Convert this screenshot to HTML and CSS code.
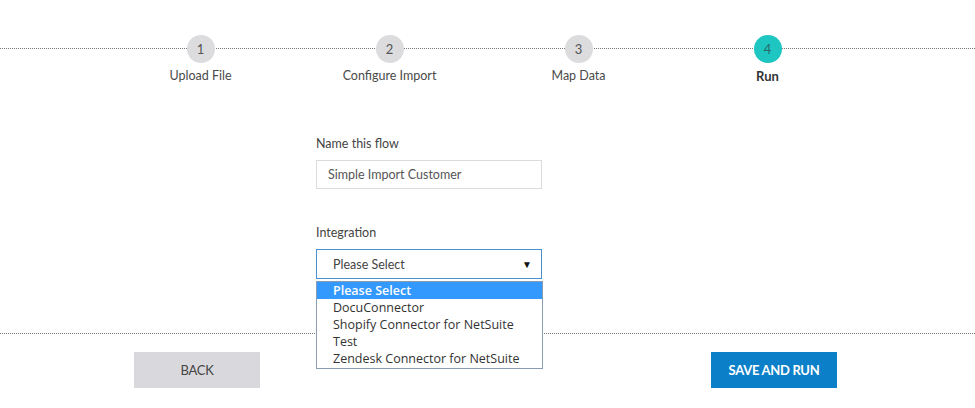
FILE: index.html
```html
<!DOCTYPE html>
<html>
<head>
<meta charset="utf-8">
<link rel="stylesheet" href="styles.css">
</head>
<body>
<div class="page">
  <header class="stepper">
    <div class="step">
      <div class="circle">1</div>
      <div class="label">Upload File</div>
    </div>
    <div class="step">
      <div class="circle">2</div>
      <div class="label">Configure Import</div>
    </div>
    <div class="step">
      <div class="circle">3</div>
      <div class="label">Map Data</div>
    </div>
    <div class="step active">
      <div class="circle">4</div>
      <div class="label">Run</div>
    </div>
  </header>

  <main class="form">
    <div class="field">
      <div class="field-label">Name this flow</div>
      <div class="input">Simple Import Customer</div>
    </div>
    <div class="field select-field">
      <div class="field-label">Integration</div>
      <div class="select">
        <span>Please Select</span>
        <span class="arrow">&#9660;</span>
      </div>
      <ul class="options">
        <li class="selected">Please Select</li>
        <li>DocuConnector</li>
        <li>Shopify Connector for NetSuite</li>
        <li>Test</li>
        <li>Zendesk Connector for NetSuite</li>
      </ul>
    </div>
  </main>

  <footer class="actions">
    <button class="btn back">BACK</button>
    <button class="btn primary">SAVE AND RUN</button>
  </footer>
</div>
</body>
</html>
```
FILE: styles.css
```css
* { box-sizing: border-box; }
html, body { margin: 0; padding: 0; background: #fff; }
body { font-family: Lato, "Open Sans", sans-serif; color: #444; }

.page {
  width: 975px;
  height: 408px;
  display: flex;
  flex-direction: column;
}

.stepper {
  position: relative;
  display: grid;
  grid-template-columns: repeat(4, 189px);
  padding-left: 106px;
  padding-top: 35px;
  height: 90px;
}
.stepper::before {
  content: "";
  position: absolute;
  left: 0;
  right: 0;
  top: 48px;
  border-top: 1px dotted #777;
}
.step {
  position: relative;
  display: flex;
  flex-direction: column;
  align-items: center;
}
.circle {
  width: 28px;
  height: 28px;
  border-radius: 50%;
  background: #dcdcdf;
  color: #555;
  font-size: 13px;
  display: flex;
  align-items: center;
  justify-content: center;
}
.label {
  margin-top: 5px;
  font-size: 12.5px;
  color: #4a4a4a;
  line-height: 16px;
}
.step.active .circle { background: #1ec6c1; color: #2a6b69; }
.step.active .label { font-weight: 700; color: #333; font-size: 13px; }

.form {
  height: 243px;
  padding-top: 46px;
  padding-left: 316px;
  display: flex;
  flex-direction: column;
  gap: 36px;
  position: relative;
  z-index: 2;
}
.field { width: 226px; position: relative; }
.field-label {
  font-size: 12.5px;
  color: #444;
  line-height: 16px;
  margin-bottom: 8px;
}
.input {
  height: 29px;
  border: 1px solid #dcdcdc;
  padding-left: 11px;
  font-size: 12.5px;
  line-height: 27px;
  color: #555;
}
.select {
  height: 30px;
  border: 1px solid #4a8fd0;
  padding: 0 9px 0 16px;
  font-size: 12.5px;
  color: #444;
  display: flex;
  align-items: center;
  justify-content: space-between;
}
.arrow { font-size: 10px; color: #111; }
.options {
  position: absolute;
  left: 0;
  top: 56px;
  width: 227px;
  margin: 0;
  padding: 0 0 1px;
  list-style: none;
  background: #fff;
  border: 1px solid #8a9cb3;
}
.options li {
  height: 17px;
  line-height: 17px;
  padding-left: 16px;
  font-family: "Open Sans", Lato, sans-serif;
  font-size: 12.5px;
  color: #333;
  white-space: nowrap;
}
.options li.selected { background: #3399ff; color: #fff; font-weight: 600; }

.actions {
  border-top: 1px dotted #777;
  display: flex;
  justify-content: space-between;
  padding: 18px 138px 0 134px;
}
.btn {
  width: 126px;
  height: 36px;
  border: 0;
  font-family: Lato, "Open Sans", sans-serif;
  font-size: 13px;
  letter-spacing: -0.3px;
}
.btn.back { background: #d9d9dd; color: #444; }
.btn.primary { background: #0b7fc7; color: #fff; font-weight: 700; }
```
